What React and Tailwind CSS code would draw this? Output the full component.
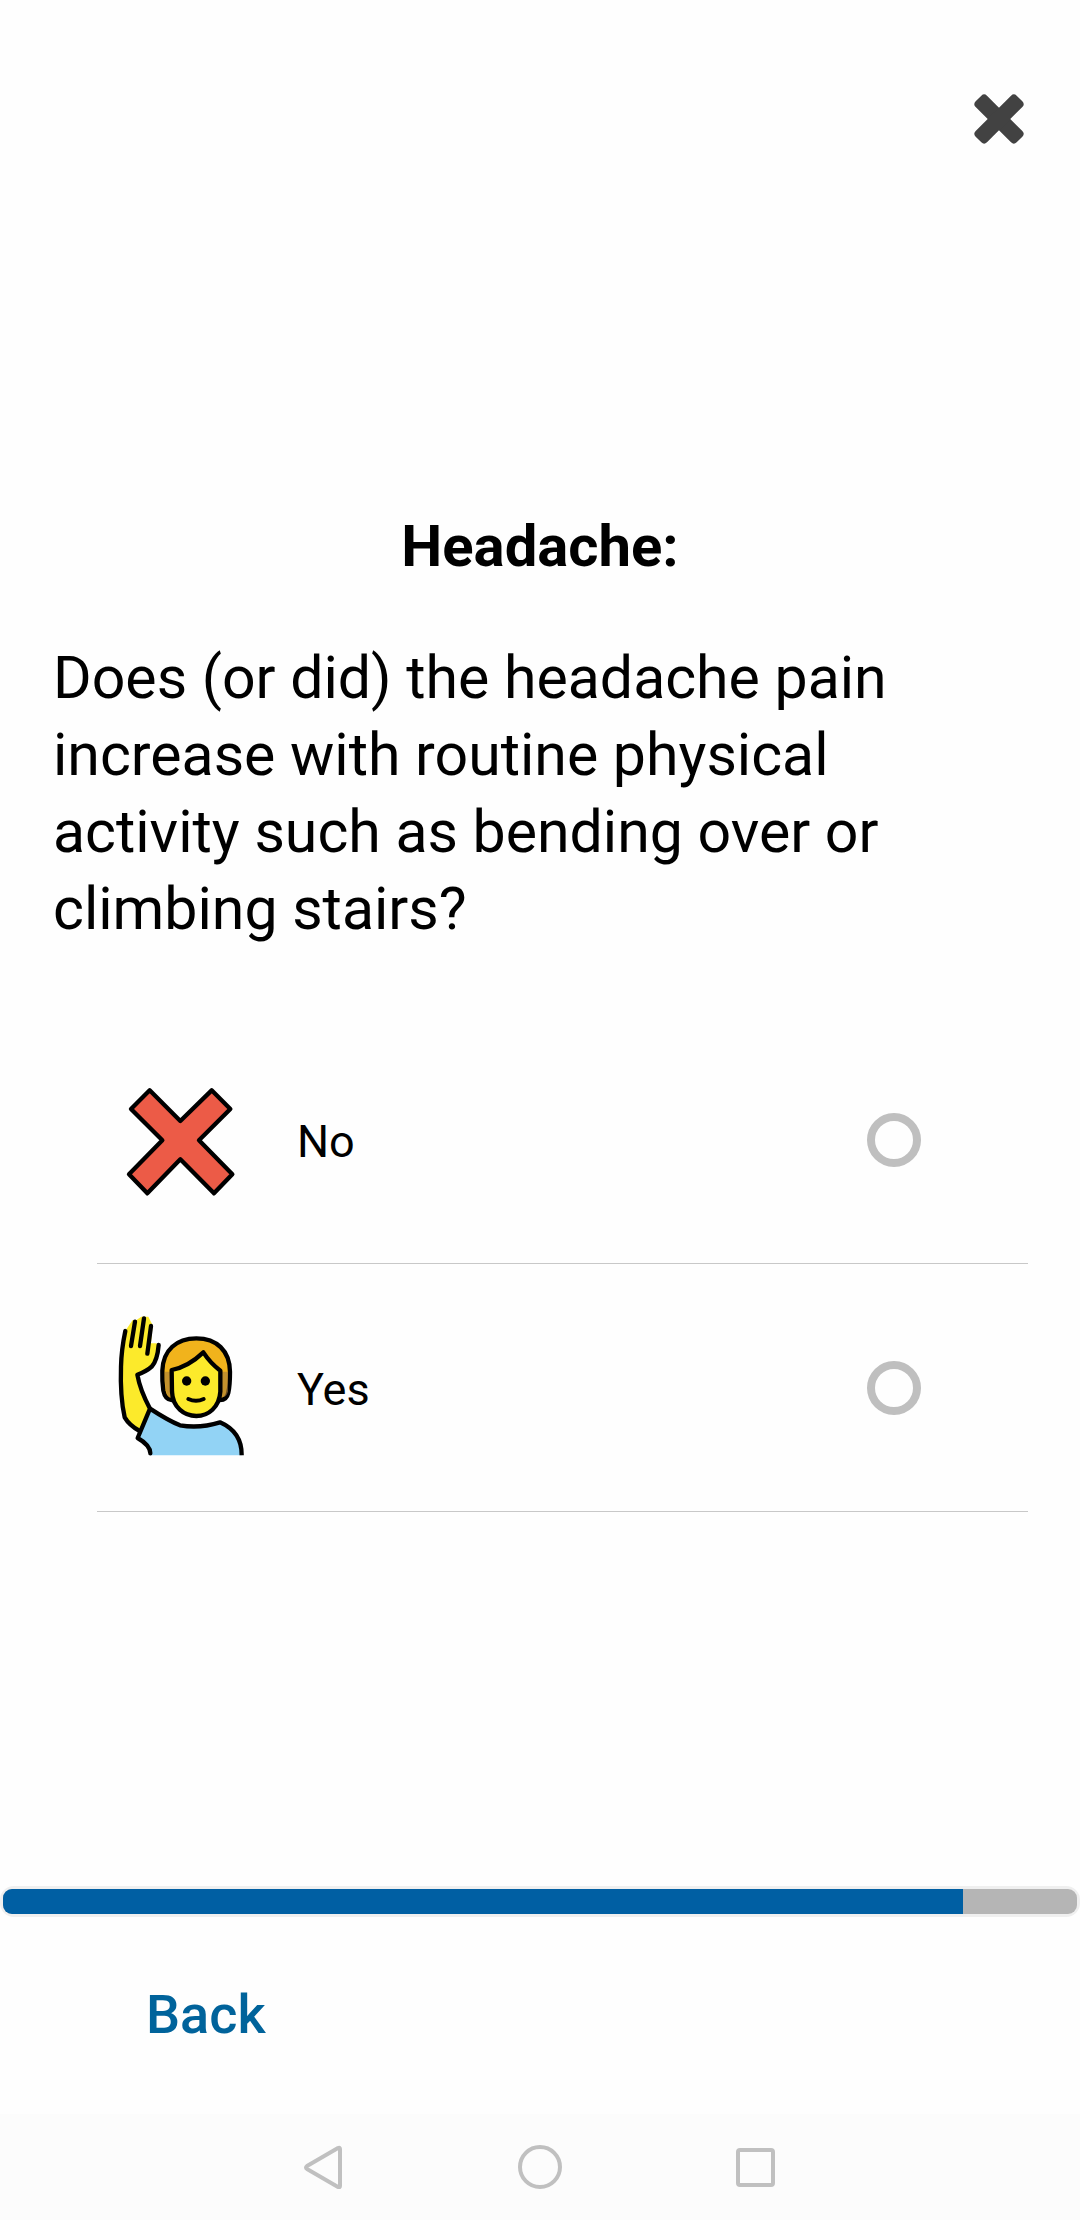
import React from "react";

function CloseIcon() {
  return (
    <svg viewBox="0 0 50 50" className="size-[50px]" fill="#424242" aria-hidden="true">
      <rect x="-4" y="17" width="58" height="16" rx="4" transform="rotate(45 25 25)" />
      <rect x="-4" y="17" width="58" height="16" rx="4" transform="rotate(-45 25 25)" />
    </svg>
  );
}

function CrossPicture() {
  return (
    <svg viewBox="45 27 396 426" className="h-[142px] w-[132px] shrink-0" aria-hidden="true">
      <path
        d="M149 91 L241 183 L335 91 L391 147 L297 241 L397 343 L342 400 L241 298 L142 400 L87 343 L187 241 L93 147 Z"
        fill="#ec5b47"
        stroke="#000"
        strokeWidth="13"
        strokeLinejoin="round"
      />
    </svg>
  );
}

function RaisedHandPicture() {
  return (
    <svg viewBox="45 51 396 426" className="h-[142px] w-[132px] shrink-0 overflow-visible" aria-hidden="true">
      <path
        d="M76 92 L98 60 L106 62 L124 50 L145 50 L158 76 L153 130 L168 130 L180 134 L168 183 Q160 200 112 224 Q118 260 150 326 L119 397 L74 355 Q62 310 62 250 V180 Z"
        fill="#fcea2b"
      />
      <path d="M150 326 Q205 366 240 376 Q300 386 360 367 Q426 400 426 466 H151 Q152 442 112 415 Z" fill="#92d3f5" />
      <g fill="none" stroke="#000" strokeWidth="13" strokeLinecap="round" strokeLinejoin="round">
        <path d="M76 93 Q64 150 63 200 Q60 290 74 352 Q88 376 119 393" />
        <path d="M105 65 L93 138 M132 55 L120 138 M153 78 L142 161" />
        <path d="M176 135 Q172 182 155 200 Q140 214 112 224 Q120 270 150 326 L113 414 Q151 436 151 460" />
        <path d="M150 326 Q205 362 240 376 Q300 386 360 367 Q426 396 425 466" strokeLinecap="butt" />
      </g>
      <path
        d="M218 300 Q196 302 190 272 Q186 245 187 212 C189 150 230 115 289 115 C350 115 389 152 390 215 Q390 255 385 278 Q380 300 360 300 Z"
        fill="#f1b31c"
        stroke="#000"
        strokeWidth="13"
        strokeLinejoin="round"
      />
      <path d="M194 215 H214 V292 Q194 294 194 215 Z M364 215 H384 V275 Q378 294 364 290 Z" fill="#a57939" opacity="0.6" />
      <path
        d="M215 210 Q265 200 310 157 Q330 188 361 212 V275 C358 322 325 348 289 348 C252 348 218 322 216 275 Z"
        fill="#fcea2b"
        stroke="#000"
        strokeWidth="13"
        strokeLinejoin="round"
      />
      <circle cx="260" cy="243" r="14" />
      <circle cx="316" cy="243" r="14" />
      <path d="M265 297 Q288 308 311 297" fill="none" stroke="#000" strokeWidth="12" strokeLinecap="round" />
    </svg>
  );
}

const options = [
  { value: "no", label: "No", Picture: CrossPicture },
  { value: "yes", label: "Yes", Picture: RaisedHandPicture },
];

function Option({ value, label, Picture }) {
  return (
    <label className="flex h-[248px] items-center border-b border-[#c8c8c8] pr-[107px] pl-[18px]">
      <Picture />
      <span className="ml-[50px] flex-1 pt-1 text-[45px] leading-[60px]">{label}</span>
      <input
        type="radio"
        name="answer"
        value={value}
        className="size-[54px] shrink-0 appearance-none rounded-full border-8 border-[#bfbfbf] checked:border-[16px] checked:border-[#005fa3]"
      />
    </label>
  );
}

export default function App() {
  const progress = 89.4;
  return (
    <div className="flex min-h-screen flex-col bg-[#fefefe] font-['Roboto',sans-serif] text-black">
      <header className="flex justify-end pt-[94px] pr-14">
        <button type="button" aria-label="Close">
          <CloseIcon />
        </button>
      </header>

      <main className="flex-1 pt-[364px]">
        <h1 className="text-center text-[58px] leading-[77px] font-bold">Headache:</h1>
        <p id="question" className="mt-[54px] pr-[130px] pl-[53px] text-[59px] leading-[77px]">
          Does (or did) the headache pain increase with routine physical activity such as bending over or climbing stairs?
        </p>
        <div role="radiogroup" aria-labelledby="question" className="mt-[69px] mr-[52px] ml-[97px]">
          {options.map((option) => (
            <Option key={option.value} {...option} />
          ))}
        </div>
      </main>

      <div
        role="progressbar"
        aria-label="Progress"
        aria-valuenow={progress}
        className="h-[31px] rounded-[14px] border-[3px] border-[#efefef] bg-[#efefef]"
      >
        <div className="h-full overflow-hidden rounded-[9px] bg-[#b5b5b5]">
          <div className="h-full bg-[#005fa3]" style={{ width: `${progress}%` }} />
        </div>
      </div>

      <footer className="flex h-[197px] items-center pb-[2px] pl-[146px]">
        <button type="button" className="text-[54px] leading-[72px] font-medium text-[#00639b]">
          Back
        </button>
      </footer>

      <nav className="flex h-[106px] items-center justify-center gap-[172px] bg-[#fcfcfc]">
        <button type="button" aria-label="System back">
          <svg viewBox="0 0 44 44" className="size-11" fill="none" stroke="#c0c0c0" strokeWidth="4" strokeLinejoin="round">
            <path d="M36 3 Q38 2 38 4 V41 Q38 43 36 42 L5 24 Q3 22.500 5 21 Z" />
          </svg>
        </button>
        <button type="button" aria-label="Home">
          <svg viewBox="0 0 44 44" className="size-11" fill="none" stroke="#c0c0c0" strokeWidth="4">
            <circle cx="22" cy="22" r="20" />
          </svg>
        </button>
        <button type="button" aria-label="Recent apps">
          <svg viewBox="0 0 44 44" className="size-11" fill="none" stroke="#c0c0c0" strokeWidth="4">
            <rect x="4" y="5" width="35" height="35" rx="2" />
          </svg>
        </button>
      </nav>
    </div>
  );
}
